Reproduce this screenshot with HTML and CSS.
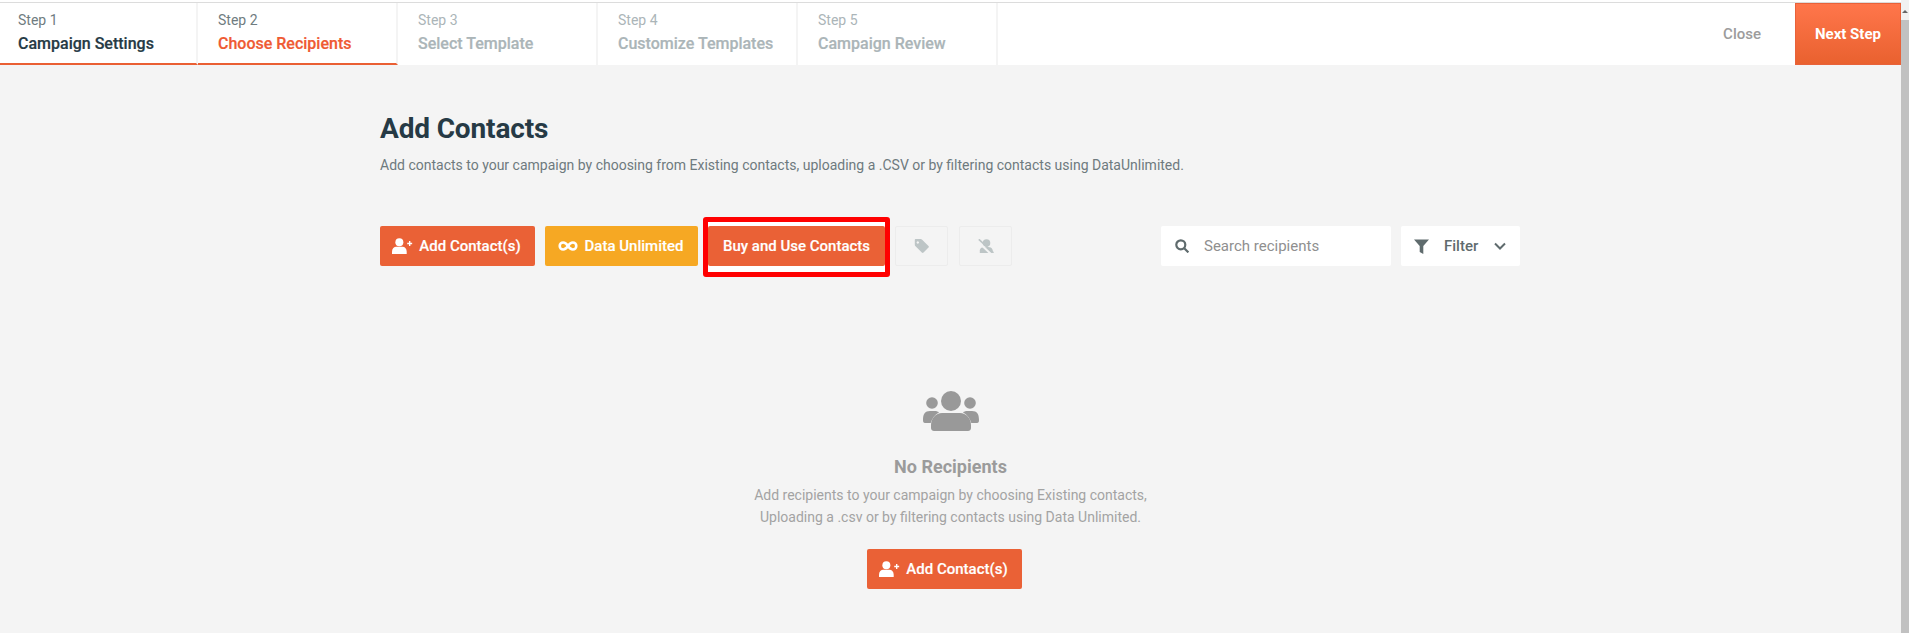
FILE: index.html
```html
<!DOCTYPE html>
<html lang="en">
<head>
<meta charset="utf-8">
<title>Add Contacts</title>
<link rel="stylesheet" href="styles.css">
</head>
<body>
<div class="app">
  <header class="topbar">
    <nav class="steps">
      <div class="step done"><span class="step-num">Step 1</span><span class="step-name">Campaign Settings</span></div>
      <div class="step active"><span class="step-num">Step 2</span><span class="step-name">Choose Recipients</span></div>
      <div class="step"><span class="step-num">Step 3</span><span class="step-name">Select Template</span></div>
      <div class="step"><span class="step-num">Step 4</span><span class="step-name">Customize Templates</span></div>
      <div class="step"><span class="step-num">Step 5</span><span class="step-name">Campaign Review</span></div>
    </nav>
    <div class="top-actions">
      <span class="close">Close</span>
      <span class="next">Next Step</span>
    </div>
  </header>
  <main class="content">
    <section class="intro">
      <h1>Add Contacts</h1>
      <p>Add contacts to your campaign by choosing from Existing contacts, uploading a .CSV or by filtering contacts using DataUnlimited.</p>
    </section>
    <section class="toolbar">
      <div class="tools-left">
        <button class="btn btn-orange w-add"><svg class="ico-add" viewBox="0 0 20 15"><circle cx="7" cy="4" r="3.800"/><path d="M0 15v-2c0-3 2-4.700 4-4.700h6c2 0 4 1.700 4 4.700v2z"/><path d="M14.500 4.500h1.700V2.800h1.300v1.700h1.700v1.300h-1.700v1.700h-1.300V5.800h-1.700z"/></svg>Add Contact(s)</button>
        <button class="btn btn-yellow"><svg class="ico-inf" viewBox="0 0 20 10"><path d="M5.200 1.500a3.500 3.500 0 1 0 0 7c2 0 3.500-1.500 4.800-3.500 1.300-2 2.800-3.500 4.800-3.500a3.500 3.500 0 1 1 0 7c-2 0-3.500-1.500-4.800-3.500-1.300-2-2.800-3.500-4.800-3.500z"/></svg>Data Unlimited</button>
        <div class="annot"><button class="btn btn-orange btn-buy">Buy and Use Contacts</button></div>
        <button class="btn-icon"><svg viewBox="0 0 15 14" class="ico-tag"><path d="M1.500 0h5.200c.5 0 .9.200 1.200.5l6.600 6.400c.5.500.5 1.200 0 1.700l-5 5c-.5.500-1.200.5-1.700 0L1.300 7c-.300-.300-.500-.700-.500-1.200V1c0-.6.300-1 .7-1zM3.800 2.300a1.200 1.200 0 1 0 .01 0z" fill-rule="evenodd"/></svg></button>
        <button class="btn-icon"><svg viewBox="0 0 16 14" class="ico-nouser"><circle cx="8.500" cy="4" r="3.800"/><path d="M1.800 14v-2.500c0-2 1.500-3.300 3.500-3.300h6.400c1.500 0 2.800 1.300 3 3.300V14z"/><path d="M-.5 2.500L13.500 15.500" class="gap"/><path d="M.8.300L15.500 13.800" class="slash"/></svg></button>
      </div>
      <div class="tools-right">
        <label class="search"><svg viewBox="0 0 14 14" class="ico-search"><circle cx="5.800" cy="5.800" r="4.500"/><path d="M9.200 9.200l4.200 4.200"/></svg><span>Search recipients</span></label>
        <div class="filter"><svg viewBox="0 0 15 15" class="ico-filter"><path d="M0 .5h15L9.300 7v8l-3.600-2V7z"/></svg><span>Filter</span><svg viewBox="0 0 12 8" class="ico-chev"><path d="M1 1.500l5 5 5-5"/></svg></div>
      </div>
    </section>
    <section class="empty">
      <svg class="ico-group" viewBox="0 0 56 40"><circle cx="28" cy="10" r="10"/><circle cx="9" cy="12" r="5.800"/><circle cx="47" cy="12" r="5.800"/><path d="M11 40c-1.500 0-3-1-3-3v-3c0-7 5-12 11-12h18c6 0 11 5 11 12v3c0 2-1.500 3-3 3z"/><path d="M0 29c0-6 2-9 7-9h5c1.500 0 3 .5 4 1.500-4 2-7 6-8.300 10.500H2c-1.500 0-2-1-2-3z"/><path d="M56 29c0-6-2-9-7-9h-5c-1.500 0-3 .5-4 1.500 4 2 7 6 8.300 10.500H54c1.500 0 2-1 2-3z"/></svg>
      <h2>No Recipients</h2>
      <p>Add recipients to your campaign by choosing Existing contacts,<br>Uploading a .csv or by filtering contacts using Data Unlimited.</p>
      <button class="btn btn-orange w-add"><svg class="ico-add" viewBox="0 0 20 15"><circle cx="7" cy="4" r="3.800"/><path d="M0 15v-2c0-3 2-4.700 4-4.700h6c2 0 4 1.700 4 4.700v2z"/><path d="M14.500 4.500h1.700V2.800h1.300v1.700h1.700v1.300h-1.700v1.700h-1.300V5.800h-1.700z"/></svg>Add Contact(s)</button>
    </section>
  </main>
  <div class="scrollbar"><span class="sb-arrow"></span><span class="sb-thumb"></span></div>
</div>
</body>
</html>
```

FILE: styles.css
```css
* { box-sizing: border-box; }
html, body { margin: 0; height: 100%; overflow: hidden; }
body { font-family: Roboto, "Liberation Sans", sans-serif; background: #f4f4f4; }
.app { position: relative; height: 633px; padding-right: 8px; }
.topbar { display: flex; justify-content: space-between; height: 65px; background: #fff; border-top: 3px solid #fff; position: relative; }
.topbar::before { content: ""; position: absolute; left: 0; right: 0; top: -1px; height: 1px; background: #dcdcdc; }
.steps { display: flex; margin-left: -2px; }
.step { width: 200px; height: 62px; padding: 7px 18px 0 20px; border-right: 2px solid #f4f4f4; display: flex; flex-direction: column; color: #abb5b8; }
.step-num { font-size: 14px; line-height: 20px; height: 20px; }
.step-name { font-size: 16px; font-weight: 500; line-height: 22px; margin-top: 3px; -webkit-text-stroke: .2px currentColor; }
.step.done, .step.active { border-bottom: 2px solid #ea5f33; }
.step.done .step-num, .step.active .step-num { color: #6f7c80; }
.step.done .step-name { color: #263a45; }
.step.active .step-name { color: #ef5a33; }
.top-actions { display: flex; align-items: stretch; }
.close { align-self: center; font-size: 15px; font-weight: 500; color: #9c9c9c; margin-right: 34px; }
.next { width: 106px; height: 62px; display: flex; align-items: center; justify-content: center; font-size: 15px; font-weight: 700; color: #fff; background: linear-gradient(#ff764b, #e9612f); border: 1px solid #e8623a; }
.content { padding-top: 46px; }
.intro { margin-left: 380px; width: 1140px; }
h1 { margin: 0; font-size: 28px; font-weight: 700; line-height: 36px; color: #263a45; letter-spacing: -.15px; }
.intro p { margin: 8px 0 0; font-size: 14px; line-height: 20px; color: #6e7a7e; }
.toolbar { display: flex; justify-content: space-between; margin: 51px 0 0 380px; width: 1140px; height: 40px; }
.tools-left, .tools-right { display: flex; }
.btn { height: 40px; border: 0; border-radius: 2px; display: inline-flex; align-items: center; justify-content: center; font-family: inherit; font-size: 15px; font-weight: 500; color: #fff; padding: 0; -webkit-text-stroke: .15px #fff; flex: none; }
.btn-orange { background: #ea6136; }
.btn-yellow { background: #f6a823; width: 153px; margin-left: 10px; padding-right: 2px; }
.w-add { width: 155px; padding-right: 2px; }
.ico-add { width: 21px; height: 16px; fill: #fff; margin-right: 6px; }
.ico-inf { width: 20px; height: 10px; fill: none; stroke: #fff; stroke-width: 2.600; margin-right: 7px; }
.annot { width: 187px; height: 60px; margin: -9px 5px 0 5px; padding: 4px 0 6px; background: #fff; border: 5px solid #f00; border-radius: 3px; flex: none; }
.btn-buy { width: 177px; display: flex; }
.btn-icon { width: 53px; height: 40px; margin-left: 11px; padding: 0; flex: none; display: flex; align-items: center; justify-content: center; background: #f4f4f4; border: 1px solid #ececec; border-radius: 2px; }
.annot + .btn-icon { margin-left: 0; }
.ico-tag { width: 15px; height: 14px; fill: #bdc5c6; }
.ico-nouser { width: 16px; height: 14px; fill: #bdc5c6; overflow: hidden; }
.gap { stroke: #f4f4f4; stroke-width: 2; }
.slash { stroke: #bdc5c6; stroke-width: 1.600; }
.search { width: 230px; height: 40px; display: flex; align-items: center; background: #fff; border-radius: 2px; padding-left: 14px; font-size: 15px; color: #8f8f8f; }
.ico-search { width: 14px; height: 14px; fill: none; stroke: #5f6b6d; stroke-width: 2.200; margin-right: 15px; flex: none; }
.filter { width: 119px; height: 40px; margin-left: 10px; display: flex; align-items: center; background: #fff; border-radius: 2px; padding-left: 13px; font-size: 15px; font-weight: 500; color: #5f6b6d; }
.ico-filter { width: 15px; height: 15px; fill: #5f6b6d; margin-right: 15px; }
.ico-chev { width: 12px; height: 8px; fill: none; stroke: #5f6b6d; stroke-width: 2; margin-left: 16px; }
.empty { margin-top: 125px; display: flex; flex-direction: column; align-items: center; }
.ico-group { width: 56px; height: 40px; fill: #999; }
h2 { margin: 24px 0 0; font-size: 18px; font-weight: 700; line-height: 24px; color: #9b9b9b; }
.empty p { margin: 5px 0 0; font-size: 14px; line-height: 22px; color: #a3a3a3; text-align: center; }
.empty .btn { margin: 21px 12px 0 0; }
.scrollbar { position: absolute; top: 0; right: 0; bottom: 0; width: 8px; background: #f1f1f1; display: flex; flex-direction: column; }
.sb-arrow { display: block; height: 20px; position: relative; }
.sb-arrow::after { content: ""; position: absolute; left: 1px; top: 10px; border-left: 3px solid transparent; border-right: 3px solid transparent; border-bottom: 3px solid #666; }
.sb-thumb { display: block; flex: 1; background: #c1c1c1; }
```
